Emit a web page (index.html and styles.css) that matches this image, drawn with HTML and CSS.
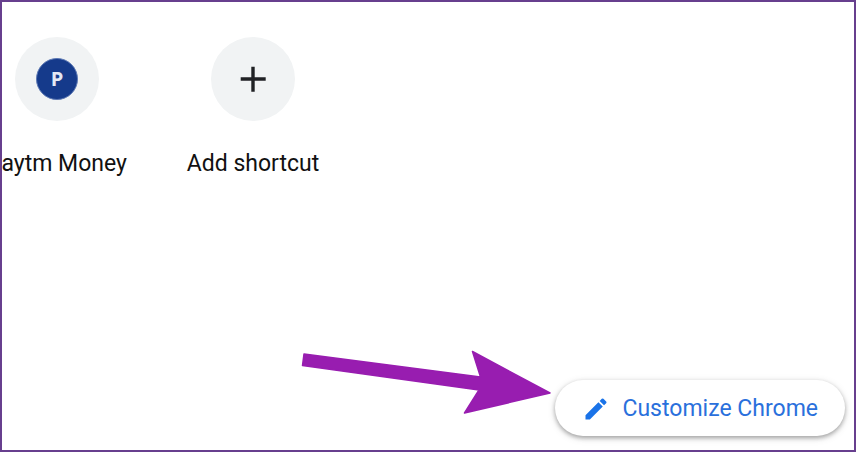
FILE: index.html
```
<!DOCTYPE html>
<html lang="en">
  <head>
    <meta charset="utf-8">
    <title>New Tab</title>
    <link rel="stylesheet" href="styles.css">
  </head>
  <body>
    <div class="page">
      <nav class="shortcuts">
        <a class="tile" href="#">
          <span class="tile-icon">
            <span class="logo">P</span>
          </span>
          <span class="tile-title">Paytm Money</span>
        </a>
        <button class="tile" type="button">
          <span class="tile-icon">
            <svg width="42" height="42" viewBox="0 0 42 42" aria-hidden="true">
              <path d="M21 8.700v25M8.700 21h25" fill="none" stroke="#202124" stroke-width="3.400"/>
            </svg>
          </span>
          <span class="tile-title">Add shortcut</span>
        </button>
      </nav>

      <footer class="footer">
        <svg class="arrow" width="250" height="86" viewBox="0 0 250 86" aria-hidden="true">
          <path d="M3 4L179.500 27L171.500 1.500L249 43L163.500 63L178 40L1.500 15.500Z" fill="#981db0" stroke="#981db0" stroke-width="1.500" stroke-linejoin="round"/>
        </svg>
        <button class="customize" type="button">
          <svg width="28" height="28" viewBox="0 0 24 24" aria-hidden="true">
            <path d="M3 17.250V21h3.750L17.810 9.940l-3.750-3.750L3 17.250zM20.710 7.040a1 1 0 0 0 0-1.410l-2.340-2.340a1 1 0 0 0-1.410 0l-1.830 1.830 3.750 3.750 1.830-1.830z" fill="#1a73e8"/>
            <path d="M5 18.500L15 8.500" stroke="#1a73e8" stroke-width="3.500"/>
          </svg>
          <span>Customize Chrome</span>
        </button>
      </footer>
    </div>
  </body>
</html>
```
FILE: styles.css
```
html, body {
    padding: 0;
    margin: 0;
}

.page {
    display: flex;
    flex-direction: column;
    justify-content: space-between;
    box-sizing: border-box;
    min-height: 100vh;
    border: 2px solid #673f8e;
    background-color: white;
    overflow: hidden;
    font-family: Roboto, sans-serif;
    font-size: 23px;
    line-height: 30px;
}

button {
    border: none;
    font: inherit;
    cursor: pointer;
}

.shortcuts {
    display: flex;
    margin-left: -43px;
    padding-top: 35px;
}

.tile {
    display: flex;
    flex-direction: column;
    align-items: center;
    gap: 28px;
    width: 196px;
    padding: 0;
    background: none;
    color: #111;
    text-decoration: none;
    white-space: nowrap;
}

.tile-icon {
    display: flex;
    align-items: center;
    justify-content: center;
    width: 84px;
    height: 84px;
    border-radius: 50%;
    background-color: #f1f3f4;
}

.logo {
    box-sizing: border-box;
    width: 42px;
    height: 42px;
    border: 1px solid #5c78b4;
    border-radius: 50%;
    background-color: #153a8b;
    color: #e3e8f4;
    font-family: "Open Sans", sans-serif;
    font-size: 20px;
    font-weight: bold;
    line-height: 40px;
    text-align: center;
}

.footer {
    display: flex;
    justify-content: flex-end;
    align-items: flex-end;
    gap: 4px;
    padding: 0 9px 14px;
}

.customize {
    display: flex;
    align-items: center;
    gap: 12px;
    box-sizing: border-box;
    height: 56px;
    padding: 2px 27px 0;
    border-radius: 28px;
    background-color: white;
    box-shadow: 0 2px 4px rgba(0, 0, 0, 0.3), 0 2px 8px rgba(0, 0, 0, 0.12);
    color: #2a70dc;
    white-space: nowrap;
}
```
